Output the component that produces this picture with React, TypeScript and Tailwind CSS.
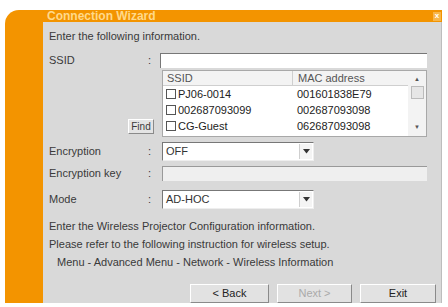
import React from "react";

const font = { fontFamily: '"Liberation Sans", Arial, sans-serif' };

function Arrow() {
  return (
    <svg width="7" height="5" viewBox="0 0 7 5">
      <path d="M0 0 L7 0 L3.5 4.5 Z" fill="#333" />
    </svg>
  );
}

function Select({ value }: { value: string }) {
  return (
    <div className="ml-[2px] flex h-[19px] w-[152px] items-stretch border-t border-l border-t-[#777] border-l-[#777] border-r border-b border-r-[#eee] border-b-[#eee] bg-white">
      <div className="flex flex-1 items-center pl-[3px] text-[#333]">{value}</div>
      <div className="my-[1px] mr-[1px] flex w-[13px] items-center justify-center border-l border-[#cfcfcf] bg-[#f4f4f4]">
        <Arrow />
      </div>
    </div>
  );
}

function Check() {
  return <div className="h-[10px] w-[10px] border border-[#555] bg-white" />;
}

export default function App() {
  const rows = [
    ["PJ06-0014", "001601838E79"],
    ["002687093099", "002687093098"],
    ["CG-Guest", "062687093098"],
  ];
  return (
    <div className="h-[307px] w-[448px] overflow-hidden bg-white pt-[10px] pl-[5px] text-[11px] text-[#3a3a3a]" style={font}>
      <div className="flex h-[293px] w-[437px] flex-col rounded-tl-[14px] bg-[#f39400]">
        <div className="flex h-[14px] items-center pl-[42px] pr-[1px]">
          <span className="flex-1 text-[12px] font-bold leading-none text-[#ffd98a]">Connection Wizard</span>
          <div className="flex h-[9px] w-[8px] items-center justify-center bg-[#f7b64a] text-[8px] font-bold leading-none text-white">x</div>
        </div>
        <div className="flex flex-1">
          <div className="w-[38px]" />
          <div className="flex flex-1 flex-col border-r border-[#bdbdbd] bg-[#d9d9d9] pl-[6px] pr-[14px]">
            <div className="mt-[8px] h-[12px] leading-[12px]">Enter the following information.</div>
            <div className="mt-[11px] flex h-[15px] items-center">
              <div className="w-[97px]">SSID</div>
              <div className="w-[14px] pl-[2px]">:</div>
              <div className="h-[15px] flex-1 border-t border-l border-[#777] bg-white" />
            </div>
            <div className="mt-[2px] flex h-[67px]">
              <div className="flex w-[113px] items-end justify-end pr-[8px] pb-[3px]">
                <div className="flex h-[15px] w-[26px] items-center justify-center border border-t-white border-l-white border-r-[#8a8a8a] border-b-[#8a8a8a] bg-[#e4e4e4] text-[10px]">Find</div>
              </div>
              <div className="flex flex-1 border border-[#a8a8a8] bg-white">
                <div className="flex flex-1 flex-col">
                  <div className="flex h-[15px] items-center border-b border-[#cfcfcf] bg-[#f3f3f3] text-[#555]">
                    <div className="w-[129px] pl-[4px]">SSID</div>
                    <div className="h-full border-l border-[#cfcfcf] pl-[5px] leading-[14px]">MAC address</div>
                  </div>
                  {rows.map(([a, b]) => (
                    <div key={a} className="flex h-[16px] items-center text-[#222]">
                      <div className="flex w-[130px] items-center gap-[2px] pl-[3px]">
                        <Check />
                        <span>{a}</span>
                      </div>
                      <div className="pl-[4px]">{b}</div>
                    </div>
                  ))}
                </div>
                <div className="flex w-[18px] flex-col items-center bg-[#f3f3f3]">
                  <div className="mt-[5px] text-[6px] leading-none text-[#555]">▲</div>
                  <div className="mt-[4px] h-[13px] w-[13px] border border-[#bbb] bg-[#e6e6e6]" />
                  <div className="flex-1" />
                  <div className="mb-[6px] text-[6px] leading-none text-[#555]">▼</div>
                </div>
              </div>
            </div>
            <div className="mt-[5px] flex items-center">
              <div className="w-[97px]">Encryption</div>
              <div className="w-[14px] pl-[2px]">:</div>
              <Select value="OFF" />
            </div>
            <div className="mt-[5px] flex h-[15px] items-center">
              <div className="w-[97px]">Encryption key</div>
              <div className="w-[14px] pl-[2px]">:</div>
              <div className="ml-[2px] h-[15px] flex-1 border-t border-l border-[#999] bg-[#efefef]" />
            </div>
            <div className="mt-[9px] flex items-center">
              <div className="w-[97px]">Mode</div>
              <div className="w-[14px] pl-[2px]">:</div>
              <Select value="AD-HOC" />
            </div>
            <div className="mt-[8px] leading-[18px]">
              <div>Enter the Wireless Projector Configuration information.</div>
              <div>Please refer to the following instruction for wireless setup.</div>
              <div className="pl-[8px]">Menu - Advanced Menu - Network - Wireless Information</div>
            </div>
            <div className="mt-[13px] mr-[-9px] flex justify-end gap-[8px]">
              <div className="flex h-[19px] w-[79px] items-center justify-center border border-t-white border-l-white border-r-[#8a8a8a] border-b-[#8a8a8a] bg-[#e2e2e2] text-[#222]">&lt; Back</div>
              <div className="flex h-[19px] w-[75px] items-center justify-center border border-t-white border-l-white border-r-[#8a8a8a] border-b-[#8a8a8a] bg-[#e2e2e2] text-[#aaa]">Next &gt;</div>
              <div className="flex h-[19px] w-[76px] items-center justify-center border border-t-white border-l-white border-r-[#8a8a8a] border-b-[#8a8a8a] bg-[#e2e2e2] text-[#222]">Exit</div>
            </div>
          </div>
        </div>
      </div>
    </div>
  );
}
